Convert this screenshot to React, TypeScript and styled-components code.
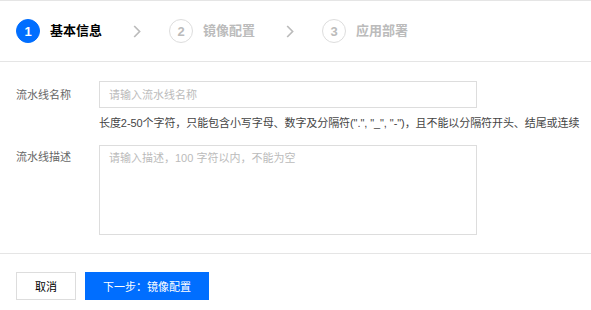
import React from "react";
import styled, { createGlobalStyle } from "styled-components";

const Global = createGlobalStyle`
  html, body { margin: 0; padding: 0; background: #fff; }
  body {
    font-family: "Liberation Sans", "Noto Sans CJK SC", sans-serif;
    font-size: 11px;
    color: #000;
  }
  * { box-sizing: border-box; }
`;

const Page = styled.div`
  width: 591px;
  display: flex;
  flex-direction: column;
`;

const StepBar = styled.div`
  height: 62px;
  border-top: 1px solid #e5e5e5;
  border-bottom: 1px solid #e5e5e5;
  display: flex;
  align-items: center;
  padding-left: 16px;
`;

const Step = styled.div`
  display: flex;
  align-items: center;
  gap: 10px;
`;

const Circle = styled.div<{ $active?: boolean }>`
  width: 24px;
  height: 24px;
  border-radius: 50%;
  display: flex;
  align-items: center;
  justify-content: center;
  font-size: 13px;
  font-weight: bold;
  line-height: 1;
  background: ${(p) => (p.$active ? "#006eff" : "#fff")};
  color: ${(p) => (p.$active ? "#fff" : "#bbb")};
  border: 1px solid ${(p) => (p.$active ? "#006eff" : "#ddd")};
`;

const StepTitle = styled.span<{ $active?: boolean }>`
  font-size: 13px;
  font-weight: bold;
  line-height: 18px;
  color: ${(p) => (p.$active ? "#000" : "#bbb")};
`;

const Chevron = styled.svg`
  width: 8px;
  height: 13px;
  margin: 0 28px 0 31px;
  display: block;
`;

const Form = styled.div`
  padding: 19px 0 0 16px;
  display: flex;
  flex-direction: column;
`;

const Row = styled.div<{ $top?: boolean }>`
  display: flex;
  align-items: ${(p) => (p.$top ? "flex-start" : "center")};
`;

const Label = styled.div<{ $top?: boolean }>`
  width: 83px;
  color: #666;
  line-height: 18px;
  padding-top: ${(p) => (p.$top ? "3px" : "0")};
`;

const Field = styled.div`
  display: flex;
  flex-direction: column;
`;

const Input = styled.input`
  width: 378px;
  height: 27px;
  border: 1px solid #ddd;
  padding: 0 9px;
  font: inherit;
  font-size: 11px;
  outline: none;
  &::placeholder { color: #bbb; }
`;

const TextArea = styled.textarea`
  width: 378px;
  height: 90px;
  border: 1px solid #ddd;
  padding: 3px 9px;
  font: inherit;
  font-size: 11px;
  line-height: 18px;
  resize: none;
  outline: none;
  display: block;
  &::placeholder { color: #bbb; }
`;

const Help = styled.div`
  margin: 6px 0 0 83px;
  color: #444;
  line-height: 18px;
  white-space: nowrap;
  letter-spacing: -0.08px;
`;

const DescRow = styled(Row)`
  margin-top: 13px;
`;

const Divider = styled.div`
  margin-top: 18px;
  border-top: 1px solid #e5e5e5;
`;

const Footer = styled.div`
  display: flex;
  gap: 9px;
  padding: 18px 0 0 16px;
`;

const Button = styled.button<{ $primary?: boolean }>`
  height: 28px;
  width: ${(p) => (p.$primary ? "124px" : "60px")};
  border: 1px solid ${(p) => (p.$primary ? "#006eff" : "#ddd")};
  background: ${(p) => (p.$primary ? "#006eff" : "#fff")};
  color: ${(p) => (p.$primary ? "#fff" : "#000")};
  font: inherit;
  font-size: 11px;
  padding: 0;
  cursor: pointer;
`;

const Arrow = () => (
  <Chevron viewBox="0 0 8 13">
    <path d="M1.2 1 L6.6 6.5 L1.2 12" fill="none" stroke="#bbb" strokeWidth="1.7" />
  </Chevron>
);

export default function App() {
  return (
    <Page>
      <Global />
      <StepBar>
        <Step>
          <Circle $active>1</Circle>
          <StepTitle $active>基本信息</StepTitle>
        </Step>
        <Arrow />
        <Step>
          <Circle>2</Circle>
          <StepTitle>镜像配置</StepTitle>
        </Step>
        <Arrow />
        <Step>
          <Circle>3</Circle>
          <StepTitle>应用部署</StepTitle>
        </Step>
      </StepBar>
      <Form>
        <Row>
          <Label>流水线名称</Label>
          <Field>
            <Input placeholder="请输入流水线名称" />
          </Field>
        </Row>
        <Help>长度2-50个字符，只能包含小写字母、数字及分隔符(".", "_", "-")，且不能以分隔符开头、结尾或连续</Help>
        <DescRow $top>
          <Label $top>流水线描述</Label>
          <TextArea placeholder="请输入描述，100 字符以内，不能为空" />
        </DescRow>
      </Form>
      <Divider />
      <Footer>
        <Button>取消</Button>
        <Button $primary>下一步：镜像配置</Button>
      </Footer>
    </Page>
  );
}
